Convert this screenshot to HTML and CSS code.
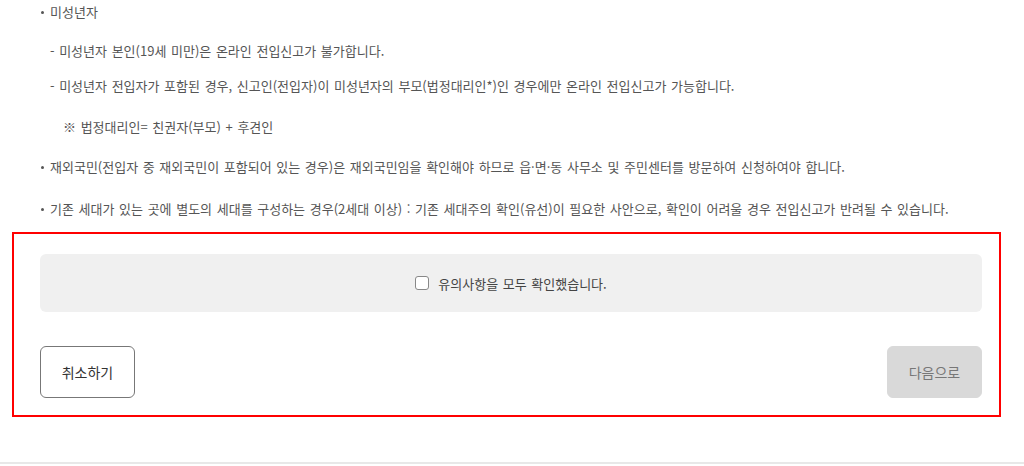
FILE: index.html
```html
<!DOCTYPE html>
<html lang="ko">
<head>
<meta charset="utf-8">
<link rel="stylesheet" href="styles.css">
</head>
<body>
<div class="page">
  <div class="notes">
    <div class="bullet">미성년자</div>
    <div class="dash">- 미성년자 본인(19세 미만)은 온라인 전입신고가 불가합니다.</div>
    <div class="dash">- 미성년자 전입자가 포함된 경우, 신고인(전입자)이 미성년자의 부모(법정대리인*)인 경우에만 온라인 전입신고가 가능합니다.</div>
    <div class="ref">※ 법정대리인= 친권자(부모) + 후견인</div>
    <div class="bullet">재외국민(전입자 중 재외국민이 포함되어 있는 경우)은 재외국민임을 확인해야 하므로 읍·면·동 사무소 및 주민센터를 방문하여 신청하여야 합니다.</div>
    <div class="bullet">기존 세대가 있는 곳에 별도의 세대를 구성하는 경우(2세대 이상) : 기존 세대주의 확인(유선)이 필요한 사안으로, 확인이 어려울 경우 전입신고가 반려될 수 있습니다.</div>
  </div>
  <div class="confirm-area">
    <label class="agree">
      <span class="checkbox"></span>
      <span class="agree-text">유의사항을 모두 확인했습니다.</span>
    </label>
    <div class="actions">
      <button class="btn btn-cancel">취소하기</button>
      <button class="btn btn-next">다음으로</button>
    </div>
  </div>
  <div class="footer-line"></div>
</div>
</body>
</html>
```
FILE: styles.css
```css
html, body {
  margin: 0;
  padding: 0;
  background: #fff;
}
body {
  font-family: "Noto Sans CJK KR", "Noto Sans", sans-serif;
  color: #555;
  font-size: 13px;
  width: 1024px;
  height: 466px;
  overflow: hidden;
}
.page {
  display: flex;
  flex-direction: column;
}
.notes {
  display: flex;
  flex-direction: column;
  padding-left: 40px;
  padding-top: 2px;
}
.notes > div {
  line-height: 20px;
  word-spacing: 1px;
  white-space: nowrap;
}
.bullet {
  position: relative;
  padding-left: 10px;
}
.bullet::before {
  content: "";
  position: absolute;
  left: 1px;
  top: 9px;
  width: 3px;
  height: 3px;
  border-radius: 50%;
  background: #555;
}
.dash {
  padding-left: 10px;
}
.notes > .bullet:first-child { margin-bottom: 19px; }
.notes > .dash { margin-bottom: 15px; }
.notes > .ref {
  padding-left: 23px;
  margin-top: 6px;
  margin-bottom: 20px;
}
.notes > .bullet + .bullet { margin-top: 22px; }

.confirm-area {
  margin: 13px 0 0 12px;
  width: 989px;
  box-sizing: border-box;
  border: 2px solid #f00;
  padding: 20px 17px 17px 26px;
  display: flex;
  flex-direction: column;
  gap: 34px;
}
.agree {
  height: 58px;
  background: #f0f0f0;
  border-radius: 6px;
  display: flex;
  align-items: center;
  justify-content: center;
  gap: 9px;
  color: #444;
  font-size: 13px;
}
.checkbox {
  width: 14px;
  height: 14px;
  box-sizing: border-box;
  border: 1px solid #888;
  border-radius: 3px;
  background: #fff;
}
.agree-text {
  word-spacing: 1px;
}
.actions {
  display: flex;
  justify-content: space-between;
}
.btn {
  width: 95px;
  height: 52px;
  border-radius: 6px;
  font-family: inherit;
  font-size: 14px;
  cursor: pointer;
}
.btn-cancel {
  background: #fff;
  border: 1px solid #777;
  color: #333;
}
.btn-next {
  background: #d9d9d9;
  border: 1px solid #d9d9d9;
  color: #777;
}
.footer-line {
  margin-top: 45px;
  height: 2px;
  background: #e8e8e8;
}
```
